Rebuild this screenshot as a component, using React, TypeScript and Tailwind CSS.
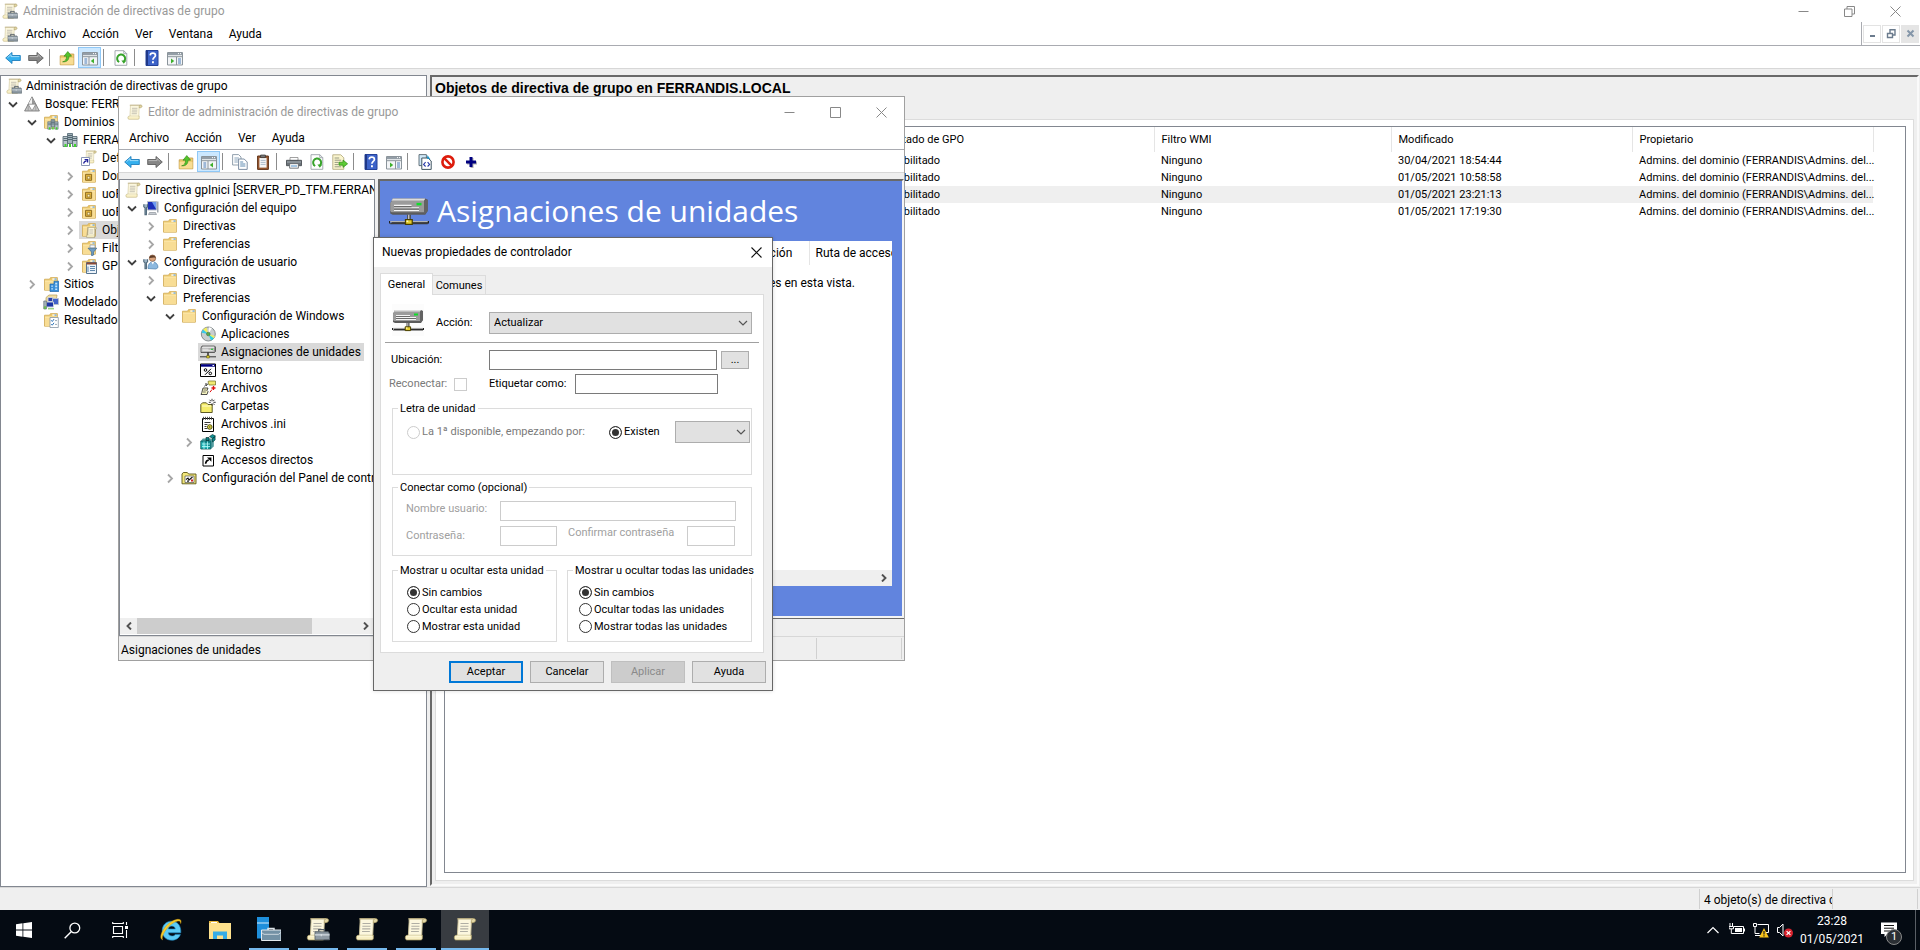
import React, { useState } from "react";

const UI = "font-['Roboto','Open_Sans',sans-serif]";

type IconProps = { className?: string };
type IconFn = (p: IconProps) => React.ReactElement;

function Svg({ children, className = "h-4 w-4", box = "0 0 16 16" }: { children: React.ReactNode; className?: string; box?: string }) {
  return (
    <svg viewBox={box} className={`shrink-0 ${className}`} fill="none" aria-hidden="true">
      {children}
    </svg>
  );
}

const ScrollShape = () => (
  <g>
    <path d="M3.4 1.200h10v2.200h-1.200L11.800 12.800H2.900L3.400 3.400z" fill="#fcf7de" stroke="#cfc59c" strokeWidth=".6" />
    <path d="M13 1c2.400-.4 3 2.200.4 2.800h-1.200V2.400z" fill="#e2d6a4" stroke="#a2945f" strokeWidth=".5" />
    <path d="M2.800 1.200h10.400" stroke="#b7ab7c" strokeWidth=".7" />
    <path d="M.9 13.800c0-1.200.5-1.600 1.500-1.600h9.800v2c0 .8-.5 1.100-1.200 1.100H2c-.8 0-1.100-.7-1.100-1.500z" fill="#f8efc4" stroke="#b5a76c" strokeWidth=".5" />
    <path d="M2.500 12.700h9" stroke="#fffbe2" strokeWidth=".7" />
    <path d="M5 4.300h5.400M4.900 6.100h5.400M4.800 7.900h5.400M4.700 9.700h5.200" stroke="#b0aea4" strokeWidth=".7" />
  </g>
);
const ScrollIcon: IconFn = ({ className }) => <Svg className={className}><ScrollShape /></Svg>;
const ScrollBoxIcon: IconFn = ({ className }) => (
  <Svg className={className}>
    <ScrollShape />
    <path d="M8.500 9.800V8.400h3.800v1.400" stroke="#555e66" strokeWidth=".9" />
    <path d="M6 9.900h8.900l.8 1.400v3.900H6z" fill="#8f9ba4" stroke="#59646c" strokeWidth=".6" />
    <path d="M6 11.900h9.700M10.200 11.300v1.600" stroke="#d5dde2" strokeWidth=".8" />
  </Svg>
);
const FolderShape = () => (
  <g>
    <path d="M1.500 14.200V3.200h5l1-1.600h6.900v12.600z" fill="#edc869" stroke="#d0ab57" strokeWidth=".8" />
    <path d="M2 14V5h12v9z" fill="#f8dd95" />
    <path d="M2 5h12" stroke="#fff0bd" strokeWidth=".8" />
    <path d="M9.300 2.400h4.200v1.300H9.300z" fill="#fff" />
    <path d="M11.500 2.500h2v1.100h-2z" fill="#4c9be0" />
  </g>
);
const FolderIcon: IconFn = ({ className }) => <Svg className={className}><FolderShape /></Svg>;
const OuIcon: IconFn = () => (
  <Svg><FolderShape /><path d="M4.600 6.300h6v6h-6z" fill="#e7b93f" stroke="#8d6a1e" /><path d="M6.300 8.300h2.600V11H6.300z" fill="#fff3c4" stroke="#8d6a1e" strokeWidth=".7" /></Svg>
);
const FolderScrollIcon: IconFn = () => (
  <Svg><FolderShape /><g transform="translate(5 4.600) scale(.7)"><path d="M2 .5h12.500L13 15.800H.4z" fill="#85806c" opacity=".6" /><ScrollShape /></g></Svg>
);
const FolderFilterIcon: IconFn = () => (
  <Svg><FolderShape /><path d="M9 5h5v3H9z" fill="#f7f7f7" stroke="#8898a6" strokeWidth=".7" /><path d="M7 8.200h8.800L12.600 12v3l-2 .8V12z" fill="#6d9cc4" stroke="#40688c" strokeWidth=".7" /></Svg>
);
const FolderGpoIcon: IconFn = () => (
  <Svg><FolderShape /><path d="M5.500 4.500h10v11h-10z" fill="#eef4fa" stroke="#56748f" /><path d="M5.500 4.500h10v2h-10z" fill="#8c4a34" /><path d="M7 8.500v5.500M9 8.500h5M9 10.500h5M9 12.500h5" stroke="#5f88ad" /></Svg>
);
const FolderSiteIcon: IconFn = () => (
  <Svg><FolderShape /><path d="M7 8h4V5.200h4.800v10.300H7z" fill="#3a8fd8" stroke="#1f66a8" strokeWidth=".7" /><path d="M8.300 9.400h1.600v1.400H8.300zM8.300 12.200h1.600v1.400H8.300zM12.200 6.800h2v1.600h-2zM12.200 9.600h2v1.600h-2zM12.200 12.400h2V14h-2z" fill="#c5e4fb" /></Svg>
);
const FolderCheckIcon: IconFn = () => (
  <Svg><FolderShape /><path d="M7 5.500h8.300v10H7z" fill="#fff" stroke="#8796a3" strokeWidth=".8" /><path d="m8.300 8.300 1 1.200 1.700-2.400M8.300 12l1 1.200 1.700-2.400" stroke="#2e75b8" /><path d="M12 8.600h2M12 12.400h2" stroke="#9aa8b4" /></Svg>
);
const ServersShape = () => (
  <g>
    <path d="M5.500 1.500h5v10h-5z" fill="#9fb0b8" stroke="#526671" strokeWidth=".8" />
    <path d="M1 4.500h4.500v10H1zM10.500 4.500H15v10h-4.500z" fill="#b9c6cc" stroke="#526671" strokeWidth=".8" />
    <path d="M6 3.500h4M6 5.500h4M6 7.500h4M1.500 6.500h4M1.500 8.500h4M11 6.500h4M11 8.500h4" stroke="#405560" strokeWidth=".8" />
    <path d="M7 12h2v3H7zM2.500 12h2v3h-2zM12 12h2v3h-2z" fill="#42d22e" />
  </g>
);
const ServersIcon: IconFn = () => <Svg><ServersShape /></Svg>;
const DomainsIcon: IconFn = () => <Svg><FolderShape /><g transform="translate(4 4.400) scale(.74)"><ServersShape /></g></Svg>;
const ForestIcon: IconFn = () => (
  <Svg>
    <path d="M8 .8 15.400 15H.6z" fill="#c6c6c6" stroke="#707070" strokeWidth=".8" />
    <path d="M8 1.400v6.800L4.400 8z" fill="#f2f2f2" /><path d="M8 1.400v6.800L11.600 8z" fill="#989898" />
    <path d="M4.200 8.200h7.600L8 14.800z" fill="#fff" stroke="#7b7b7b" strokeWidth=".7" />
    <path d="M4.200 8.200v6.600M11.800 8.200v6.600" stroke="#888" strokeWidth=".6" />
  </Svg>
);
const GpoLinkIcon: IconFn = () => (
  <Svg><g transform="translate(2.500 0) scale(.85)"><ScrollShape /></g><path d="M.5 7.500h8v8h-8z" fill="#fff" stroke="#8a96b5" /><path d="M2.500 13.500C3 11.500 4 11 5.600 10.800M3.600 9.600h3v3" stroke="#20209a" strokeWidth="1.300" /></Svg>
);
const ModelIcon: IconFn = () => (
  <Svg>
    <path d="M3 3.500 6 1h8l-1 7H3z" fill="#f0dda0" stroke="#b39c59" strokeWidth=".7" />
    <path d="M5 3.500h5v4H5z" fill="#2a3fa8" stroke="#c4cad8" /><path d="M9.500 4.500h6v6h-6z" fill="#4262c9" stroke="#b8c0cc" />
    <path d="M3.500 8h7v5h-7z" fill="#1f37a6" stroke="#c8d0dc" /><path d="M.8 7h2.600v8H.8z" fill="#a9b6bd" stroke="#5f7079" strokeWidth=".7" />
    <path d="M5 14.800h6M1.300 12.800h1.600v1.600H1.300z" stroke="#5dbb3a" strokeWidth=".9" />
  </Svg>
);
const ComputerIcon: IconFn = () => (
  <Svg>
    <path d="M4.500 1.500h9v8.500h-9z" fill="#1c2fb8" stroke="#b9bfc9" /><path d="M9 2h4.200v7.600z" fill="#6f9bf0" />
    <path d="M14 1.500h1.500v11H14z" fill="#a0a7b0" /><path d="M6.500 12.500h6l1 2h-8z" fill="#c7ccd2" stroke="#80868e" strokeWidth=".6" />
    <path d="M.8 4.200v2.600l1.200 1v7h1.400v-7l1.200-1V4.200" stroke="#50687a" strokeWidth="1.100" fill="#9eb4c4" />
  </Svg>
);
const UserIcon: IconFn = () => (
  <Svg>
    <circle cx="9.500" cy="4.200" r="3.200" fill="#d8a27c" stroke="#7b5138" strokeWidth=".6" /><path d="M6.200 4C6.200.2 12.800 0 12.800 4.600 11.500 2.600 9 4.200 6.200 4z" fill="#5e3d28" />
    <path d="M5 14.500C5 10 7 8 9.800 8s5.200 2 5.200 5.500l-2 1.500z" fill="#8db9df" stroke="#4c80ad" strokeWidth=".7" /><path d="m8.400 8 1.400 2.600L11.200 8z" fill="#fff" />
    <path d="M.8 5.200v2.600l1.200 1v6h1.400v-6l1.200-1V5.200" stroke="#50687a" strokeWidth="1.100" fill="#9eb4c4" />
  </Svg>
);
const DiscIcon: IconFn = () => (
  <Svg>
    <circle cx="8.300" cy="8" r="7" fill="#c9cdcf" stroke="#6f7679" strokeWidth=".8" />
    <path d="M8.300 8 3 3.400 6.500 1.300z" fill="#f3ee5d" /><path d="M8.300 8 1.500 6.700 3 3.400z" fill="#38c9e8" /><path d="M8.300 8 14 12.300 11 14.600z" fill="#2ad2e0" /><path d="m8.300 8 6.600 2-1 2.300z" fill="#e8f06a" /><path d="M8.300 8 9 1.200l3 .8z" fill="#fff" />
    <circle cx="8.300" cy="8" r="1.800" fill="#5ba84e" stroke="#3d6f37" strokeWidth=".6" />
  </Svg>
);
const DriveIcon: IconFn = ({ className }) => (
  <Svg className={className}>
    <path d="M2 2h12.500l1 1v4.500l-1 1H1V4z" fill="#8d8d8d" stroke="#222" strokeWidth=".6" />
    <path d="M1.500 4 2.600 2.400h11.800L14 4z" fill="#e2e2e2" /><path d="M1.400 4.200H14v3.600H1.400z" fill="#bdbdbd" />
    <path d="M2.500 5.200h6M2.500 6.600h10" stroke="#fff" strokeWidth=".6" /><path d="M11 4.800h2v1h-2z" fill="#0ccb1c" />
    <path d="M8 8.500V12" stroke="#222" strokeWidth="1.400" /><path d="M0 12.800h16" stroke="#222" strokeWidth=".9" /><path d="M0 13.600h16" stroke="#a5a5a5" strokeWidth=".6" />
    <path d="M6.700 11.600h2.600V14H6.700z" fill="#e5d42e" stroke="#4d4600" strokeWidth=".5" />
  </Svg>
);
const BigDriveIcon: IconFn = ({ className }) => (
  <Svg className={className} box="0 0 32 32">
    <path d="M3 6h26l2 1v9l-2 3H3l-2-1v-8z" fill="#5b5b5b" />
    <path d="M3 6h26l-1 2H2z" fill="#dcdcdc" /><path d="M1 9.500 2.500 7.500H28V17H2l-1-1z" fill="#9b9b9b" />
    <path d="M28 7.500 31 7v9l-3 2.500z" fill="#636363" />
    <path d="M4 11.500h14M4 13.500h20M4 15.500h20" stroke="#f4f4f4" /><path d="M4 12.500h14M4 14.500h20" stroke="#6a6a6a" />
    <path d="M22 9.500h4v2h-4z" fill="#11dd2a" />
    <path d="M14.500 19h3v5h-3z" fill="#4a4a4a" /><path d="M15.300 19h1v4h-1z" fill="#d0d0d0" />
    <path d="M0 25h32" stroke="#222" strokeWidth="2" strokeDasharray="1 1 30" /><path d="M1 24.400h30" stroke="#b4b4b4" /><path d="M1 26h30" stroke="#3a3a3a" />
    <path d="M13.200 22.800h5.400v3.800h-5.400z" fill="#e8cf2c" stroke="#4a4000" /><path d="M14 23.600h1.400v1.200H14z" fill="#fff9b8" />
  </Svg>
);
const EnvIcon: IconFn = () => (
  <Svg><path d="M.5 2h15v12.500H.5z" fill="#fff" stroke="#000" /><path d="M1 2.300h14v2.400H1z" fill="#000086" /><path d="M12.500 3h1.600v1h-1.600z" fill="#fff" /><circle cx="5.500" cy="8" r="1.300" stroke="#000" /><circle cx="10.300" cy="11.400" r="1.300" stroke="#000" /><path d="m5 12.800 6-6" stroke="#000" /></Svg>
);
const FilesIcon: IconFn = () => (
  <Svg>
    <path d="M8 1.500 9 1h6.500v4H9z" fill="#f1ea72" stroke="#6e6a20" strokeWidth=".7" /><path d="M5 4h2.500L6 6" stroke="#333" /><path d="M13.500 6v4M11.500 8h4" stroke="#e01010" strokeWidth="1.300" />
    <path d="M3 8h5l-1 2.500 1 1-1 3H1l.8-2z" fill="#f8f6c0" stroke="#222" strokeWidth=".8" /><path d="M3.500 10h3M2.800 12h3M4 6.500 6 5" stroke="#555" strokeWidth=".8" /><path d="M10 12.200 12 9.500" stroke="#e01010" />
  </Svg>
);
const NewFolderIcon: IconFn = () => (
  <Svg>
    <path d="M.8 14.500v-8L2.500 4.800h3.800L8 6.500h4.200v8z" fill="#f4ec6a" stroke="#4d4a16" strokeWidth=".9" /><path d="M2 8h9.400" stroke="#fffbd0" />
    <path d="M12 .8v2.400M12 5.400v2.200M8.800 4.300h2M13.400 4.300h2.300M9.600 1.800l1.200 1.300M14.400 1.800l-1.200 1.300M14.400 6.800l-1.200-1.300" stroke="#222" strokeWidth=".9" />
  </Svg>
);
const IniIcon: IconFn = () => (
  <Svg>
    <path d="M2.500 2.500h11v13h-11z" fill="#fff" stroke="#000" /><path d="M3.500.8v3M5.500.8v3M7.500.8v3M9.500.8v3M11.500.8v3" stroke="#444" strokeWidth=".9" />
    <path d="M4.500 6.500h6M4.500 8.500h3M4.500 10.500h2M4.500 12.500h3" stroke="#222" strokeWidth=".9" /><circle cx="9.800" cy="11" r="2.300" fill="#e9e04a" stroke="#444100" strokeWidth=".9" /><circle cx="9.800" cy="11" r=".7" fill="#333" />
  </Svg>
);
const RegistryIcon: IconFn = () => (
  <Svg>
    <path d="M.8 7h10v8h-10z" fill="#23b8bb" stroke="#064a4d" strokeWidth=".8" /><path d="m.8 7 2-2.400h8.400l2.600 1.200v6.600L10.800 15z" fill="#0c7477" opacity=".7" />
    <path d="M2 10h8M2 12.500h8M4 7.500V15M7.500 7.500V15" stroke="#b8fbfb" strokeWidth=".8" /><path d="m9.500 2.500 3-2 3 1.600-3 2.300zM12.500 4.600V8l2.600-2V2.600z" fill="#0f8f92" stroke="#033" strokeWidth=".6" /><path d="M6 3.500h3v3H6z" fill="#0e8084" stroke="#022" strokeWidth=".6" />
  </Svg>
);
const ShortcutIcon: IconFn = () => (
  <Svg><path d="M3 3.500h10.500V14H3z" fill="#fff" stroke="#000" /><path d="M5.600 11.800c.2-2.600 1.200-3.600 3.200-3.800" stroke="#000" strokeWidth="1.600" /><path d="M7 5.400h4.400v4.400z" fill="#000" /></Svg>
);
const PanelIcon: IconFn = () => (
  <Svg><path d="M1 13.800V4L2.300 2.500h4L7.600 4H15v9.800z" fill="#f2e77a" stroke="#5b5614" strokeWidth=".9" /><path d="M4 6h9v6.500H4z" fill="#fff" stroke="#555" strokeWidth=".7" /><path d="m5 9.500 2-1.500 1 2 3.500-3" stroke="#111" strokeWidth="1.100" /><path d="M10 9.500h2v2h-2z" fill="#d41e1e" /><path d="M6 10.500h2v1.200H6z" fill="#222" /></Svg>
);

/* Toolbar icons */
const BackIcon: IconFn = () => <Svg><path d="M.7 8 7 2.500v3h8.300v5H7v3z" fill="#35b0ee" stroke="#1f7fbd" strokeWidth=".9" /><path d="M2.500 7.600 6 4.600v2h8.300" stroke="#a9e0fb" strokeWidth=".9" /></Svg>;
const ForwardIcon: IconFn = () => <Svg><path d="M15.300 8 9 2.500v3H.7v5H9v3z" fill="#868686" stroke="#5f5f5f" strokeWidth=".9" /><path d="M1.600 6.600h8.400v-2l3 2.800" stroke="#bdbdbd" strokeWidth=".9" /></Svg>;
const UpFolderIcon: IconFn = () => (
  <Svg><path d="M1.200 14.800v-9h5.300l1-1.800h7.300v10.800z" fill="#f0cd72" stroke="#c39a45" strokeWidth=".8" /><path d="M1.600 8h12.800v6.400H1.600z" fill="#f8dd93" /><path d="M3.600 11.800c2.600-.3 4-2.400 4-5.600H5L8.800 1.500l3.800 4.700H10c0 3.600-2 6-6.400 5.600z" fill="#54c32c" stroke="#2e8413" strokeWidth=".6" /></Svg>
);
const PaneLeftIcon: IconFn = () => (
  <Svg><path d="M.5 2.500h15v12.500H.5z" fill="#f3f5f7" stroke="#8b949b" /><path d="M1 3h14v2.200H1z" fill="#949ea7" /><path d="M11 3.600h1M13 3.600h1" stroke="#fff" /><path d="M1 6.700h14M7 7v8" stroke="#8b949b" /><path d="M2.400 9h2.800M2.400 11h2.800M2.400 13h2.800" stroke="#4b7cb8" /><path d="M12 8.500v5L8.800 11z" fill="#3eb02c" /></Svg>
);
const PaneRightIcon: IconFn = () => (
  <Svg><path d="M.5 2.500h15v12.500H.5z" fill="#f3f5f7" stroke="#8b949b" /><path d="M1 3h14v2.200H1z" fill="#949ea7" /><path d="M11 3.600h1M13 3.600h1" stroke="#fff" /><path d="M1 6.700h14M9.500 7v8" stroke="#8b949b" /><path d="M11 9h3M11 11h3M11 13h3" stroke="#4b7cb8" /><path d="M4 8.500v5L7.200 11z" fill="#3eb02c" /></Svg>
);
const RefreshIcon: IconFn = () => (
  <Svg><path d="M2 .7h8.800l3 3v11.600H2z" fill="#fff" stroke="#9aa2a8" strokeWidth=".9" /><path d="M10.800.7v3h3" stroke="#9aa2a8" strokeWidth=".9" /><path d="M6.200 12A4 4 0 1 1 11 11.300" stroke="#37a32b" strokeWidth="2" /><path d="m8.400 10.400 5 .2-2.600 3.200z" fill="#37a32b" /></Svg>
);
const HelpIcon: IconFn = () => (
  <Svg><path d="M2 .5h12v15H2z" fill="#3d63c9" stroke="#24429a" /><path d="M2 .5h2v15H2z" fill="#1f3888" /><path d="M6.200 5.400c.1-3 5.200-3 5.200 0 0 2-2.500 2.100-2.500 4.400" stroke="#fff" strokeWidth="1.700" /><path d="M8 11.300h1.900v1.900H8z" fill="#fff" /></Svg>
);
const CopyIcon: IconFn = () => (
  <Svg><path d="M.6.6h6l2.400 2.400v8H.6z" fill="#fff" stroke="#8796a5" strokeWidth=".9" /><path d="M2.400 4h4.500M2.400 6h3.500M2.400 8h3.500" stroke="#8ea7bd" /><path d="M6.600 5h5.600L15.200 8v7.400H6.600z" fill="#fff" stroke="#70839a" strokeWidth=".9" /><path d="M8.200 8h3M8.200 10h5.200M8.200 12h5.200" stroke="#5f8ab0" /></Svg>
);
const PasteIcon: IconFn = () => (
  <Svg><path d="M2.600 2h10.800v13.400H2.600z" fill="#9a5a32" stroke="#5f3217" /><path d="M4.400 4h7.200v9.600H4.400z" fill="#f6f6f6" /><path d="M5.600 1h4.800v2.600H5.600z" fill="#777" stroke="#333" strokeWidth=".7" /><path d="M5.600 6.400h5M5.600 8.400h5M5.600 10.400h5" stroke="#aebdcb" /></Svg>
);
const PrintIcon: IconFn = () => (
  <Svg><path d="M4 3.500h8v3H4z" fill="#fff" stroke="#8a8a8a" strokeWidth=".8" /><path d="M.5 6.300h15v5.400H.5z" fill="#6d747a" stroke="#3d4347" strokeWidth=".8" /><path d="M1 8h14" stroke="#a7afb5" /><path d="M3.600 9.600h8.800v4.600H3.600z" fill="#f8f8f8" stroke="#595f64" strokeWidth=".8" /><path d="M5 12h6" stroke="#5596d0" /></Svg>
);
const ExportIcon: IconFn = () => (
  <Svg><path d="M.8.8h8l3 3v11.500h-11z" fill="#fbf6cf" stroke="#b5ae82" strokeWidth=".9" /><path d="M2.600 4h4.600M2.600 6.200h6.600M2.600 8.400h4M2.600 10.600h4M2.600 12.800h6.600" stroke="#8b8e7a" strokeWidth=".9" /><path d="M7 8.200h4V6l4.600 3.800L11 13.400v-2.200H7z" fill="#5dcb35" stroke="#2e8a16" strokeWidth=".7" /></Svg>
);
const XmlIcon: IconFn = () => (
  <Svg><path d="M2 .6h7.400v11H2z" fill="#cfe7f7" stroke="#58666f" strokeWidth=".9" /><path d="M4.800 4H11l3.200 3v8.400H4.800z" fill="#fff" stroke="#3f5461" /><path d="M10.400 1l3 4.200-3.400-.4z" fill="#1f91c4" /><path d="M8.600 8.200 6.600 10.400l2 2.100M10.600 8.200l2 2.200-2 2.100" stroke="#2438a8" strokeWidth="1.100" /></Svg>
);
const StopIcon: IconFn = () => <Svg><circle cx="8" cy="8" r="5.600" stroke="#dd1c0c" strokeWidth="2.600" /><path d="m4.200 4.200 7.600 7.600" stroke="#dd1c0c" strokeWidth="2.400" /></Svg>;
const PlusIcon: IconFn = () => <Svg><path d="M7.500 4h3v3.500H14v3h-3.500V14h-3v-3.500H4v-3h3.500z" fill="#b0b0b0" /><path d="M6.500 3h3v3.500H13v3H9.500V13h-3V9.500H3v-3h3.500z" fill="#000080" /></Svg>;

type TB = { icon: IconFn; label: string; active?: boolean } | "sep";

function Toolbar({ items }: { items: TB[] }) {
  return (
    <div className="flex h-[23px] shrink-0 border-b border-[#d7d7d7] bg-white pt-px pl-px">
      {items.map((it, i) =>
        it === "sep" ? (
          <span key={i} className="flex w-2 py-[2px] pl-[2px]"><span className="w-px bg-[#8c8c8c]" /></span>
        ) : (
          <button key={i} aria-label={it.label} className={it.active ? "flex w-[23px] items-center justify-center border border-[#90c8f6] bg-[#cce8ff]" : "flex w-[23px] items-center justify-center hover:bg-[#e5f3ff]"}>
            <it.icon />
          </button>
        )
      )}
    </div>
  );
}

const MAIN_TOOLS: TB[] = [
  { icon: BackIcon, label: "Atrás" }, { icon: ForwardIcon, label: "Adelante" }, "sep",
  { icon: UpFolderIcon, label: "Subir un nivel" }, { icon: PaneLeftIcon, label: "Árbol de consola", active: true }, "sep",
  { icon: RefreshIcon, label: "Actualizar" }, "sep",
  { icon: HelpIcon, label: "Ayuda" }, { icon: PaneRightIcon, label: "Panel de acciones" },
];
const EDITOR_TOOLS: TB[] = [
  { icon: BackIcon, label: "Atrás" }, { icon: ForwardIcon, label: "Adelante" }, "sep",
  { icon: UpFolderIcon, label: "Subir un nivel" }, { icon: PaneLeftIcon, label: "Árbol de consola", active: true }, "sep",
  { icon: CopyIcon, label: "Copiar" }, { icon: PasteIcon, label: "Pegar" }, "sep",
  { icon: PrintIcon, label: "Imprimir" }, { icon: RefreshIcon, label: "Actualizar" }, { icon: ExportIcon, label: "Exportar lista" }, "sep",
  { icon: HelpIcon, label: "Ayuda" }, { icon: PaneRightIcon, label: "Panel de acciones" }, "sep",
  { icon: XmlIcon, label: "Mostrar XML" }, { icon: StopIcon, label: "Deshabilitar" }, { icon: PlusIcon, label: "Nuevo" },
];

type Node = { label: string; level: number; icon: IconFn; open?: boolean; selected?: boolean };

const PAD = ["pl-[5px]", "pl-[5px]", "pl-6", "pl-[43px]", "pl-[62px]"];

function TreeRow({ node }: { node: Node }) {
  const root = node.level === 0;
  return (
    <li className={`flex h-[18px] items-center ${PAD[node.level]}`}>
      {!root && (
        <span className="flex w-4 shrink-0 items-center">
          {node.open === true && <Svg className="h-[14px] w-[14px]" box="0 0 14 14"><path d="m3 5.500 4 4 4-4" stroke="#404040" strokeWidth="1.800" /></Svg>}
          {node.open === false && <Svg className="h-[14px] w-[14px]" box="0 0 14 14"><path d="m5 3.500 4 4-4 4" stroke="#a6a6a6" strokeWidth="1.800" /></Svg>}
        </span>
      )}
      <button className={node.selected ? "flex h-[18px] items-center gap-[5px] bg-[#d9d9d9] pl-[2px] pr-[3px] whitespace-nowrap" : root ? "flex h-[18px] items-center gap-1 whitespace-nowrap" : "flex h-[18px] items-center gap-[5px] pl-[2px] pr-[3px] whitespace-nowrap"}>
        <node.icon />
        <span>{node.label}</span>
      </button>
    </li>
  );
}

const MAIN_TREE: Node[] = [
  { label: "Administración de directivas de grupo", level: 0, icon: ScrollBoxIcon },
  { label: "Bosque: FERRA", level: 1, icon: ForestIcon, open: true },
  { label: "Dominios", level: 2, icon: DomainsIcon, open: true },
  { label: "FERRAN", level: 3, icon: ServersIcon, open: true },
  { label: "Def", level: 4, icon: GpoLinkIcon },
  { label: "Dor", level: 4, icon: OuIcon, open: false },
  { label: "uoP", level: 4, icon: OuIcon, open: false },
  { label: "uoP", level: 4, icon: OuIcon, open: false },
  { label: "Obj", level: 4, icon: FolderScrollIcon, open: false, selected: true },
  { label: "Filt", level: 4, icon: FolderFilterIcon, open: false },
  { label: "GPO", level: 4, icon: FolderGpoIcon, open: false },
  { label: "Sitios", level: 2, icon: FolderSiteIcon, open: false },
  { label: "Modelado", level: 2, icon: ModelIcon },
  { label: "Resultados", level: 2, icon: FolderCheckIcon },
];
const EDITOR_TREE: Node[] = [
  { label: "Directiva gpInici [SERVER_PD_TFM.FERRANDIS", level: 0, icon: ScrollIcon },
  { label: "Configuración del equipo", level: 1, icon: ComputerIcon, open: true },
  { label: "Directivas", level: 2, icon: FolderIcon, open: false },
  { label: "Preferencias", level: 2, icon: FolderIcon, open: false },
  { label: "Configuración de usuario", level: 1, icon: UserIcon, open: true },
  { label: "Directivas", level: 2, icon: FolderIcon, open: false },
  { label: "Preferencias", level: 2, icon: FolderIcon, open: true },
  { label: "Configuración de Windows", level: 3, icon: FolderIcon, open: true },
  { label: "Aplicaciones", level: 4, icon: DiscIcon },
  { label: "Asignaciones de unidades", level: 4, icon: DriveIcon, selected: true },
  { label: "Entorno", level: 4, icon: EnvIcon },
  { label: "Archivos", level: 4, icon: FilesIcon },
  { label: "Carpetas", level: 4, icon: NewFolderIcon },
  { label: "Archivos .ini", level: 4, icon: IniIcon },
  { label: "Registro", level: 4, icon: RegistryIcon, open: false },
  { label: "Accesos directos", level: 4, icon: ShortcutIcon },
  { label: "Configuración del Panel de control", level: 3, icon: PanelIcon, open: false },
];

const GPO_ROWS = ["30/04/2021 18:54:44", "01/05/2021 10:58:58", "01/05/2021 23:21:13", "01/05/2021 17:19:30"];

function CaptionButton({ label, children, className }: { label: string; children: React.ReactNode; className: string }) {
  return (
    <button aria-label={label} className={`flex items-center justify-center ${className}`}>
      <Svg className="h-[11px] w-[11px]" box="0 0 11 11">{children}</Svg>
    </button>
  );
}

function MainWindow() {
  const th = "h-[25px] border-r border-[#e5e5e5] pt-px pl-[7px] text-left font-normal";
  return (
    <div className="flex min-h-0 flex-1 flex-col bg-[#efefef]">
      <div className="flex h-[22px] shrink-0 items-center bg-white pr-[2px] pl-[2px] text-[#999]">
        <ScrollBoxIcon />
        <span className="ml-[5px] flex-1">Administración de directivas de grupo</span>
        <CaptionButton label="Minimizar" className="w-[46px]"><path d="M.5 5.500h10" stroke="#888" /></CaptionButton>
        <CaptionButton label="Restaurar" className="w-[46px]"><path d="M.5 3h7.500v7.500H.5zM3 3V.5h7.500V8H8" stroke="#888" /></CaptionButton>
        <CaptionButton label="Cerrar" className="w-[46px]"><path d="m.5.5 10 10M10.500.5l-10 10" stroke="#888" /></CaptionButton>
      </div>
      <div className="flex h-6 shrink-0 items-center border-b border-[#a9abb1] bg-white pl-[2px]">
        <ScrollBoxIcon />
        <div className="flex flex-1 gap-4 pl-2">
          {["Archivo", "Acción", "Ver", "Ventana", "Ayuda"].map((m) => <button key={m}>{m}</button>)}
        </div>
        <div className="flex h-full items-center gap-px border-l border-[#a9abb1] pr-px pl-px">
          <CaptionButton label="Minimizar consola" className="h-[18px] w-[18px] border border-[#e3e3e3]"><path d="M3 8h5" stroke="#6b7b8d" strokeWidth="2" /></CaptionButton>
          <CaptionButton label="Restaurar consola" className="h-[18px] w-[18px] border border-[#e3e3e3]"><path d="M1.500 5.500h5v4h-5zM4 5V1.800h5V7H7" stroke="#6b7b8d" strokeWidth="1.400" /></CaptionButton>
          <CaptionButton label="Cerrar consola" className="h-[18px] w-[18px] bg-[#e5e5e5]"><path d="m2.500 2.500 6 6M8.500 2.500l-6 6" stroke="#8496a9" strokeWidth="2" /></CaptionButton>
        </div>
      </div>
      <Toolbar items={MAIN_TOOLS} />
      <div className="mt-[6px] flex min-h-0 flex-1 gap-[3px] pr-px">
        <div className="w-[427px] shrink-0 overflow-hidden border border-[#828790] bg-white pt-px">
          <ul>{MAIN_TREE.map((n, i) => <TreeRow key={i} node={n} />)}</ul>
        </div>
        <main className="mb-px flex min-w-0 flex-1 flex-col border-2 border-t-[#696969] border-r-[#fafafa] border-b-[#fafafa] border-l-[#696969] px-[3px] pb-[3px]">
          <h1 className="h-[42px] font-['Liberation_Sans',Arial,sans-serif] text-sm leading-[22px] font-bold">Objetos de directiva de grupo en FERRANDIS.LOCAL</h1>
          <div className="flex min-h-0 flex-1 border border-[#dcdcdc] bg-white pt-[6px] pr-[7px] pb-[7px] pl-2">
            <div className="min-w-0 flex-1 border border-[#828790] text-[11px]">
              <table className="w-full table-fixed border-collapse whitespace-nowrap">
                <colgroup><col className="w-[438px]" /><col className="w-[271px]" /><col className="w-[237px]" /><col className="w-[241px]" /><col className="w-[241px]" /><col /></colgroup>
                <thead>
                  <tr><th className={th} /><th className={th}>Estado de GPO</th><th className={th}>Filtro WMI</th><th className={th}>Modificado</th><th className={th}>Propietario</th><td /></tr>
                </thead>
                <tbody>
                  {GPO_ROWS.map((d, i) => {
                    const td = i === 2 ? "h-[17px] bg-[#efefef] pt-px pl-[7px] leading-4" : "h-[17px] pt-px pl-[7px] leading-4";
                    return <tr key={d}><td className={td} /><td className={td}>Habilitado</td><td className={td}>Ninguno</td><td className={td}>{d}</td><td className={td}>Admins. del dominio (FERRANDIS\Admins. del...</td><td /></tr>;
                  })}
                </tbody>
              </table>
            </div>
          </div>
        </main>
      </div>
      <footer className="flex h-[23px] shrink-0 justify-end border-t border-[#d7d7d7] py-px">
        <div className="w-[133px] overflow-hidden border-l border-[#d0d0d0] pl-1 leading-[22px] whitespace-nowrap">4 objeto(s) de directiva de grupo</div>
        <div className="mr-[2px] w-[86px] border-x border-[#d0d0d0]" />
      </footer>
    </div>
  );
}

function EditorWindow() {
  const th = "h-6 border-r border-[#e5e5e5] pl-[6px] text-left font-normal";
  return (
    <section className="absolute top-[96px] left-[118px] flex h-[565px] w-[787px] flex-col border border-[#a0a0a0] bg-[#efefef]">
      <div className="flex h-[30px] shrink-0 items-center bg-white pl-[8px] text-[#999]">
        <ScrollIcon />
        <span className="ml-[5px] flex-1">Editor de administración de directivas de grupo</span>
        <CaptionButton label="Minimizar" className="h-full w-[46px]"><path d="M.5 5.500h10" stroke="#888" /></CaptionButton>
        <CaptionButton label="Maximizar" className="h-full w-[46px]"><path d="M.5.5h10v10H.5z" stroke="#888" /></CaptionButton>
        <CaptionButton label="Cerrar" className="h-full w-[46px]"><path d="m.5.5 10 10M10.500.5l-10 10" stroke="#888" /></CaptionButton>
      </div>
      <div className="flex h-[23px] shrink-0 items-center gap-4 border-b border-[#a9abb1] bg-white pl-[10px]">
        {["Archivo", "Acción", "Ver", "Ayuda"].map((m) => <button key={m}>{m}</button>)}
      </div>
      <Toolbar items={EDITOR_TOOLS} />
      <div className="mt-[6px] flex min-h-0 flex-1 gap-[3px]">
        <div className="flex w-[256px] shrink-0 flex-col border border-[#828790] bg-white py-px">
          <ul className="min-h-0 flex-1 overflow-hidden">{EDITOR_TREE.map((n, i) => <TreeRow key={i} node={n} />)}</ul>
          <div className="flex h-4 shrink-0 bg-[#efefef]">
            <span className="flex w-[17px] items-center justify-center"><Svg className="h-2 w-2" box="0 0 8 8"><path d="M6 .5 2.500 4 6 7.500" stroke="#505050" strokeWidth="1.900" /></Svg></span>
            <span className="flex-1"><span className="block h-full w-[175px] bg-[#cdcdcd]" /></span>
            <span className="flex w-[17px] items-center justify-center"><Svg className="h-2 w-2" box="0 0 8 8"><path d="M2 .5 5.500 4 2 7.500" stroke="#505050" strokeWidth="1.900" /></Svg></span>
          </div>
        </div>
        <div className="flex min-w-0 flex-1 flex-col">
          <div className="flex min-h-0 flex-1 flex-col border-2 border-t-[#696969] border-r-[#f4f4f4] border-b-[#f4f4f4] border-l-[#696969] bg-[#6184de] pr-[10px] pb-[30px] pl-[9px]">
            <div className="flex h-[60px] shrink-0 items-center gap-2 text-white">
              <BigDriveIcon className="h-10 w-10" />
              <h2 className="font-['Open_Sans','Noto_Sans',sans-serif] text-[30px] leading-[60px] whitespace-nowrap">Asignaciones de unidades</h2>
            </div>
            <div className="flex min-h-0 flex-1 flex-col overflow-hidden bg-white">
              <table className="w-full table-fixed border-collapse whitespace-nowrap">
                <colgroup><col className="w-[360px]" /><col className="w-[60px]" /><col /></colgroup>
                <thead><tr><th className={th} /><th className={th}>Acción</th><th className="overflow-hidden pl-[6px] text-left font-normal">Ruta de acceso</th></tr></thead>
              </table>
              <p className="flex-1 pt-[10px] pr-[37px] text-right">No hay elementos disponibles en esta vista.</p>
              <div className="flex h-4 shrink-0 items-center justify-end bg-[#efefef] pr-1"><Svg className="h-2 w-2" box="0 0 8 8"><path d="M2 .5 5.500 4 2 7.500" stroke="#505050" strokeWidth="1.900" /></Svg></div>
            </div>
          </div>
          <div className="h-[18px] shrink-0 border-t border-[#696969]" />
        </div>
      </div>
      <footer className="flex h-6 shrink-0 border-t border-[#d7d7d7] py-px">
        <span className="flex-1 pl-[2px] leading-6">Asignaciones de unidades</span>
        <span className="mr-[2px] w-[86px] border-x border-[#d0d0d0]" />
      </footer>
    </section>
  );
}

const Chevron = () => <Svg className="pointer-events-none absolute top-1/2 right-1 h-[10px] w-[10px] -translate-y-1/2" box="0 0 10 10"><path d="m1 3 4 4 4-4" stroke="#555" strokeWidth="1.200" /></Svg>;

function Radio({ id, name, label, checked, disabled, onChange }: { id: string; name: string; label: string; checked: boolean; disabled?: boolean; onChange?: () => void }) {
  return (
    <div className="flex h-[17px] items-center gap-[2px] whitespace-nowrap">
      <input id={id} name={name} type="radio" checked={checked} disabled={disabled} onChange={onChange ?? (() => undefined)}
        className="h-[13px] w-[13px] shrink-0 appearance-none rounded-full border border-[#333] bg-white checked:bg-[#333] checked:shadow-[inset_0_0_0_2px_#fff] disabled:border-[#ccc]" />
      <label htmlFor={id} className={disabled ? "text-[#7a7a7a]" : ""}>{label}</label>
    </div>
  );
}

function VisibilityGroup({ name, legend, options, className, inset }: { name: string; legend: string; options: string[]; className: string; inset: string }) {
  const [sel, setSel] = useState(0);
  return (
    <fieldset className={`h-20 min-w-0 border border-[#dcdcdc] pl-[5px] ${className}`}>
      <legend className="h-4 bg-white px-[2px] leading-[18px] whitespace-nowrap">{legend}</legend>
      <div className={`pt-[6px] ${inset}`}>
        {options.map((o, i) => <Radio key={o} id={`${name}-${i}`} name={name} label={o} checked={sel === i} onChange={() => setSel(i)} />)}
      </div>
    </fieldset>
  );
}

function PropertiesDialog() {
  const input = "border border-[#7a7a7a] bg-white px-1 disabled:border-[#ccc]";
  const btn = "h-[22px] w-[74px] border bg-[#e1e1e1]";
  return (
    <section role="dialog" aria-labelledby="dlg-title" className="absolute top-[237px] left-[373px] w-[400px] border border-[#666] bg-[#efefef] pb-[7px] text-[11px] leading-4 shadow-[0_0_4px_rgba(0,0,0,0.15)]">
      <div className="flex h-[29px] items-center justify-between bg-white pr-[9px] pb-px pl-2 text-xs">
        <h2 id="dlg-title">Nuevas propiedades de controlador</h2>
        <CaptionButton label="Cerrar" className="h-5 w-[13px]"><path d="m.5.5 10 10M10.500.5l-10 10" stroke="#111" strokeWidth="1.100" /></CaptionButton>
      </div>
      <div className="pt-[6px] pr-2 pl-[6px]">
        <div role="tablist" className="flex items-end">
          <button role="tab" aria-selected="true" className="-mb-px h-[22px] w-[53px] border border-b-0 border-[#dcdcdc] bg-white">General</button>
          <button role="tab" aria-selected="false" className="h-[19px] w-[53px] border border-b-0 border-l-0 border-[#dcdcdc] pt-px">Comunes</button>
        </div>
        <div className="border border-[#dcdcdc] bg-white pb-[10px]">
          <div className="flex h-[47px] items-center pt-[9px] pl-[11px]">
            <BigDriveIcon className="h-8 w-8 self-start bg-[#fcfcfc]" />
            <label htmlFor="accion" className="w-[65px] pl-3">Acción:</label>
            <div className="relative">
              <select id="accion" className="h-[22px] w-[263px] appearance-none border border-[#adadad] bg-[#e1e1e1] pl-1"><option>Actualizar</option></select>
              <Chevron />
            </div>
          </div>
          <div className="mx-1 h-px bg-[#a0a0a0]" />
          <div className="flex items-center pt-[7px] pl-[10px]">
            <label htmlFor="ubicacion" className="w-[98px]">Ubicación:</label>
            <input id="ubicacion" className={`h-5 w-[228px] ${input}`} />
            <button aria-label="Examinar" className="ml-1 h-[18px] w-7 border border-[#adadad] bg-[#e1e1e1] leading-3">...</button>
          </div>
          <div className="flex items-center pt-1 pl-2">
            <label htmlFor="reconectar" className="w-[65px] text-[#7a7a7a]">Reconectar:</label>
            <input id="reconectar" type="checkbox" disabled className="h-[13px] w-[13px] appearance-none border border-[#ccc] bg-white" />
            <label htmlFor="etiqueta" className="w-[108px] pl-[22px] whitespace-nowrap">Etiquetar como:</label>
            <input id="etiqueta" className={`h-5 w-[143px] ${input}`} />
          </div>
          <fieldset className="mx-[11px] mt-[6px] h-[75px] border border-[#dcdcdc] pl-[5px]">
            <legend className="h-4 px-[2px] leading-[18px]">Letra de unidad</legend>
            <div className="flex items-center pt-[5px] pl-[9px]">
              <div className="w-[202px]"><Radio id="letra-0" name="letra" label="La 1ª disponible, empezando por:" checked={false} disabled /></div>
              <div className="w-[66px]"><Radio id="letra-1" name="letra" label="Existen" checked /></div>
              <div className="relative">
                <select aria-label="Letra" className="h-[22px] w-[75px] appearance-none border border-[#adadad] bg-[#e1e1e1]" />
                <Chevron />
              </div>
            </div>
          </fieldset>
          <fieldset className="mx-[11px] mt-1 h-[77px] border border-[#dcdcdc] pl-[5px]">
            <legend className="h-4 px-[2px] leading-[18px]">Conectar como (opcional)</legend>
            <div className="flex items-center pt-[6px] pl-2 text-[#a0a0a0]">
              <label htmlFor="usuario" className="w-[94px] pb-1">Nombre usuario:</label>
              <input id="usuario" disabled className={`h-5 w-[236px] ${input}`} />
            </div>
            <div className="flex items-center pt-1 pl-2 text-[#a0a0a0]">
              <label htmlFor="clave" className="w-[94px]">Contraseña:</label>
              <input id="clave" type="password" disabled className={`h-5 w-[57px] ${input}`} />
              <label htmlFor="clave2" className="w-[130px] pb-[6px] pl-[11px]">Confirmar contraseña</label>
              <input id="clave2" type="password" disabled className={`h-5 w-[48px] ${input}`} />
            </div>
          </fieldset>
          <div className="mx-[11px] mt-[6px] flex justify-between">
            <VisibilityGroup name="esta" className="w-[165px]" inset="pl-[9px]" legend="Mostrar u ocultar esta unidad" options={["Sin cambios", "Ocultar esta unidad", "Mostrar esta unidad"]} />
            <VisibilityGroup name="todas" className="w-[185px]" inset="pl-[6px]" legend="Mostrar u ocultar todas las unidades" options={["Sin cambios", "Ocultar todas las unidades", "Mostrar todas las unidades"]} />
          </div>
        </div>
      </div>
      <div className="flex justify-end gap-[7px] pt-2 pr-[6px]">
        <button className="h-[22px] w-[74px] border-2 border-[#0078d7] bg-[#e1e1e1]">Aceptar</button>
        <button className={`${btn} border-[#adadad]`}>Cancelar</button>
        <button disabled className="h-[22px] w-[74px] border border-[#bfbfbf] bg-[#ccc] text-[#8a8a8a]">Aplicar</button>
        <button className={`${btn} border-[#adadad]`}>Ayuda</button>
      </div>
    </section>
  );
}

/* Taskbar icons */
const WinIcon: IconFn = () => <Svg className="h-4 w-4"><path d="M0 2.200 6.500 1.300v6.300H0zM7.300 1.200 16 0v7.600H7.300zM0 8.400h6.500v6.300L0 13.800zM7.300 8.400H16V16l-8.700-1.200z" fill="#fff" /></Svg>;
const SearchIcon: IconFn = () => <Svg className="h-[17px] w-[17px]" box="0 0 17 17"><circle cx="10.800" cy="6" r="4.900" stroke="#fff" strokeWidth="1.300" /><path d="M7.200 9.700.7 16.200" stroke="#fff" strokeWidth="1.400" /></Svg>;
const TaskViewIcon: IconFn = () => <Svg className="h-4 w-4"><path d="M1.500 4.500h9v7h-9zM.7 0v1.500h10.600V0M.7 16v-1.500h10.600V16M14.500 0v3M14.500 8v8" stroke="#fff" strokeWidth="1.100" /><path d="M13 4h3v3h-3z" fill="#fff" /></Svg>;
const IeIcon: IconFn = () => (
  <Svg className="h-6 w-6" box="0 0 24 24">
    <path d="M21.800 14.800H9.200c.3 3.600 5.600 4.200 7 1.600h5.200c-1.500 4.200-5 5.800-8.600 5.800-6 0-9.600-4-9.600-9.400C3.200 7 7.200 3.200 12.600 3.200c5.800 0 9.600 4.200 9.200 11.600zM9.300 11h7c-.3-3.800-6.500-3.900-7 0z" fill="#5ccbf5" stroke="#1c8ac6" strokeWidth=".6" />
    <path d="M3.600 21.800C-1.500 20 5 7 14 2.800 19 .4 23.400.6 21.600 5.500c.3-3.300-2.800-3-6.600-1C7.500 8.500 1.600 19 3.600 21.800z" fill="#f7cd2e" stroke="#d39c11" strokeWidth=".5" />
  </Svg>
);
const ExplorerIcon: IconFn = () => (
  <Svg className="h-[22px] w-[22px]" box="0 0 22 22"><path d="M0 2h9l1.500 2H0z" fill="#e8b73c" /><path d="M2 3h6v1H2z" fill="#fff" /><path d="M0 4h22v16H0z" fill="#fee18d" /><path d="M4 20v-7.500h14V20h-4v-3.500H8V20z" fill="#37ade6" /></Svg>
);
const ServerMgrIcon: IconFn = () => (
  <Svg className="h-6 w-6" box="0 0 24 24"><path d="M0 0h12v21.500H0z" fill="#1e8fdc" /><path d="M0 6h12" stroke="#d4ecfb" /><path d="M11 13v-1.600h6V13" stroke="#dce3e8" strokeWidth="1.500" /><path d="M4.500 13H24v10.500H4.500z" fill="#7391a5" stroke="#e3e9ed" /><path d="M4.500 15.500 7 17.300h14.500l2.500-1.800" stroke="#e3e9ed" strokeWidth=".8" /></Svg>
);

const TASKS: { icon: IconFn; label: string; running?: boolean; active?: boolean }[] = [
  { icon: IeIcon, label: "Internet Explorer" }, { icon: ExplorerIcon, label: "Explorador" },
  { icon: ServerMgrIcon, label: "Administrador del servidor", running: true },
  { icon: ScrollBoxIcon, label: "Administración de directivas", running: true },
  { icon: ScrollIcon, label: "Editor 1", running: true }, { icon: ScrollIcon, label: "Editor 2", running: true },
  { icon: ScrollIcon, label: "Editor 3", running: true, active: true },
];

function Taskbar() {
  return (
    <nav className="flex h-10 shrink-0 bg-[#050b13] text-white">
      {[WinIcon, SearchIcon, TaskViewIcon].map((I, i) => (
        <button key={i} aria-label={["Inicio", "Buscar", "Vista de tareas"][i]} className="flex w-12 items-center justify-center"><I /></button>
      ))}
      <div className="ml-[3px] flex flex-1 gap-px">
        {TASKS.map((t) => (
          <button key={t.label} aria-label={t.label} className={t.active ? "flex w-12 flex-col items-center bg-[#383c41]" : "flex w-12 flex-col items-center"}>
            <span className="flex flex-1 items-center"><t.icon className="h-6 w-6" /></span>
            {t.running && <span className={t.active ? "h-[2px] w-full bg-[#76b9ed]" : "h-[2px] w-10 bg-[#76b9ed]"} />}
          </button>
        ))}
      </div>
      <div className="flex items-center">
        <button aria-label="Iconos ocultos" className="flex w-6 justify-center"><Svg className="h-3 w-3" box="0 0 12 12"><path d="M.5 9 6 3.500 11.500 9" stroke="#fff" strokeWidth="1.200" /></Svg></button>
        <button aria-label="Batería" className="flex w-6 justify-center"><Svg><path d="M1 1v3M3.500 1v3M0 4.500h4.500v2.300H0zM2.300 7v4.500H5" stroke="#fff" /><path d="M5 4.500h9.500v7H5" stroke="#fff" /><path d="M6 6h7v4H6z" fill="#fff" /><path d="M15.500 6.500v3" stroke="#fff" /></Svg></button>
        <button aria-label="Red" className="flex w-6 justify-center"><Svg><path d="M4.500 2.500h11v8h-4M2 5v6.500h4.500M2 13.500h6" stroke="#fff" /><path d="M.5 1.500h3v3h-3z" stroke="#fff" /><path d="m11 6 4.800 9.500H6.200z" fill="#f7c31a" /><path d="M11 9v3.500M11 13.300v1.200" stroke="#222" strokeWidth="1.200" /></Svg></button>
        <button aria-label="Volumen" className="flex w-6 justify-center"><Svg><path d="M.5 5.500h2L6 2v12l-3.500-3.500h-2z" stroke="#fff" /><circle cx="11.500" cy="11" r="4.500" fill="#d8232e" /><path d="m9.600 9.100 3.800 3.800M13.400 9.100l-3.800 3.800" stroke="#fff" strokeWidth="1.200" /></Svg></button>
        <div className="flex w-[70px] flex-col items-center leading-[18px]"><span>23:28</span><span>01/05/2021</span></div>
        <button aria-label="Notificaciones" className="relative flex h-10 w-12 items-center justify-center">
          <Svg className="mr-1 h-4 w-4"><path d="M0 .5h16v11.500H6.500L3.500 15v-3H0z" fill="#fff" /><path d="M3 3.500h10M3 6.200h10M3 9h7" stroke="#111" /></Svg>
          <span className="absolute top-[19px] left-[19px] flex h-4 w-4 items-center justify-center rounded-full border border-[#888] bg-[#2b2f34] text-[11px]">1</span>
        </button>
        <span className="mr-1 h-10 w-px bg-[#5a5f65]" />
      </div>
    </nav>
  );
}

export default function App() {
  return (
    <div className={`relative flex h-screen flex-col overflow-hidden bg-[#efefef] text-xs leading-4 text-black ${UI}`}>
      <MainWindow />
      <Taskbar />
      <EditorWindow />
      <PropertiesDialog />
    </div>
  );
}
